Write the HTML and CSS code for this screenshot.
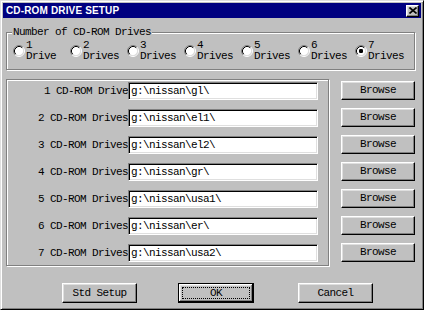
FILE: index.html
```html
<!DOCTYPE html>
<html>
<head>
<meta charset="utf-8">
<link rel="stylesheet" href="styles.css">
</head>
<body>
<div class="window">
  <div class="titlebar">
    <span class="title">CD-ROM DRIVE SETUP</span>
    <span class="close"><svg width="8" height="7" viewBox="0 0 8 7"><path d="M0.5 0.5 L7.5 6.5 M7.5 0.5 L0.5 6.5" stroke="#000" stroke-width="1.6" fill="none"/></svg></span>
  </div>
  <div class="body">
    <div class="group">
      <div class="group-title">Number of CD-ROM Drives</div>
      <div class="radios">
        <div class="radio-item"><svg class="radio" width="12" height="12" viewBox="0 0 12 12"><circle cx="6" cy="6" r="4.5" fill="#fff"/><path d="M2.11 9.89 A5.5 5.5 0 0 1 9.89 2.11" stroke="#808080" fill="none"/><path d="M9.89 2.11 A5.5 5.5 0 0 1 2.11 9.89" stroke="#fff" fill="none"/><path d="M2.82 9.18 A4.5 4.5 0 0 1 9.18 2.82" stroke="#000" fill="none"/><path d="M9.18 2.82 A4.5 4.5 0 0 1 2.82 9.18" stroke="#dfdfdf" fill="none"/></svg><div class="radio-label">1<br>Drive</div></div>
        <div class="radio-item"><svg class="radio" width="12" height="12" viewBox="0 0 12 12"><circle cx="6" cy="6" r="4.5" fill="#fff"/><path d="M2.11 9.89 A5.5 5.5 0 0 1 9.89 2.11" stroke="#808080" fill="none"/><path d="M9.89 2.11 A5.5 5.5 0 0 1 2.11 9.89" stroke="#fff" fill="none"/><path d="M2.82 9.18 A4.5 4.5 0 0 1 9.18 2.82" stroke="#000" fill="none"/><path d="M9.18 2.82 A4.5 4.5 0 0 1 2.82 9.18" stroke="#dfdfdf" fill="none"/></svg><div class="radio-label">2<br>Drives</div></div>
        <div class="radio-item"><svg class="radio" width="12" height="12" viewBox="0 0 12 12"><circle cx="6" cy="6" r="4.5" fill="#fff"/><path d="M2.11 9.89 A5.5 5.5 0 0 1 9.89 2.11" stroke="#808080" fill="none"/><path d="M9.89 2.11 A5.5 5.5 0 0 1 2.11 9.89" stroke="#fff" fill="none"/><path d="M2.82 9.18 A4.5 4.5 0 0 1 9.18 2.82" stroke="#000" fill="none"/><path d="M9.18 2.82 A4.5 4.5 0 0 1 2.82 9.18" stroke="#dfdfdf" fill="none"/></svg><div class="radio-label">3<br>Drives</div></div>
        <div class="radio-item"><svg class="radio" width="12" height="12" viewBox="0 0 12 12"><circle cx="6" cy="6" r="4.5" fill="#fff"/><path d="M2.11 9.89 A5.5 5.5 0 0 1 9.89 2.11" stroke="#808080" fill="none"/><path d="M9.89 2.11 A5.5 5.5 0 0 1 2.11 9.89" stroke="#fff" fill="none"/><path d="M2.82 9.18 A4.5 4.5 0 0 1 9.18 2.82" stroke="#000" fill="none"/><path d="M9.18 2.82 A4.5 4.5 0 0 1 2.82 9.18" stroke="#dfdfdf" fill="none"/></svg><div class="radio-label">4<br>Drives</div></div>
        <div class="radio-item"><svg class="radio" width="12" height="12" viewBox="0 0 12 12"><circle cx="6" cy="6" r="4.5" fill="#fff"/><path d="M2.11 9.89 A5.5 5.5 0 0 1 9.89 2.11" stroke="#808080" fill="none"/><path d="M9.89 2.11 A5.5 5.5 0 0 1 2.11 9.89" stroke="#fff" fill="none"/><path d="M2.82 9.18 A4.5 4.5 0 0 1 9.18 2.82" stroke="#000" fill="none"/><path d="M9.18 2.82 A4.5 4.5 0 0 1 2.82 9.18" stroke="#dfdfdf" fill="none"/></svg><div class="radio-label">5<br>Drives</div></div>
        <div class="radio-item"><svg class="radio" width="12" height="12" viewBox="0 0 12 12"><circle cx="6" cy="6" r="4.5" fill="#fff"/><path d="M2.11 9.89 A5.5 5.5 0 0 1 9.89 2.11" stroke="#808080" fill="none"/><path d="M9.89 2.11 A5.5 5.5 0 0 1 2.11 9.89" stroke="#fff" fill="none"/><path d="M2.82 9.18 A4.5 4.5 0 0 1 9.18 2.82" stroke="#000" fill="none"/><path d="M9.18 2.82 A4.5 4.5 0 0 1 2.82 9.18" stroke="#dfdfdf" fill="none"/></svg><div class="radio-label">6<br>Drives</div></div>
        <div class="radio-item"><svg class="radio" width="12" height="12" viewBox="0 0 12 12"><circle cx="6" cy="6" r="4.5" fill="#fff"/><path d="M2.11 9.89 A5.5 5.5 0 0 1 9.89 2.11" stroke="#808080" fill="none"/><path d="M9.89 2.11 A5.5 5.5 0 0 1 2.11 9.89" stroke="#fff" fill="none"/><path d="M2.82 9.18 A4.5 4.5 0 0 1 9.18 2.82" stroke="#000" fill="none"/><path d="M9.18 2.82 A4.5 4.5 0 0 1 2.82 9.18" stroke="#dfdfdf" fill="none"/><rect x="4" y="4" width="4" height="4" rx="1.2" fill="#000"/></svg><div class="radio-label">7<br>Drives</div></div>
      </div>
    </div>
    <div class="drives">
      <div class="panel">
        <div class="row"><span class="row-label">1 CD-ROM Drive</span><input class="field" type="text" value="g:\nissan\gl\"></div>
        <div class="row"><span class="row-label">2 CD-ROM Drives</span><input class="field" type="text" value="g:\nissan\el1\"></div>
        <div class="row"><span class="row-label">3 CD-ROM Drives</span><input class="field" type="text" value="g:\nissan\el2\"></div>
        <div class="row"><span class="row-label">4 CD-ROM Drives</span><input class="field" type="text" value="g:\nissan\gr\"></div>
        <div class="row"><span class="row-label">5 CD-ROM Drives</span><input class="field" type="text" value="g:\nissan\usa1\"></div>
        <div class="row"><span class="row-label">6 CD-ROM Drives</span><input class="field" type="text" value="g:\nissan\er\"></div>
        <div class="row"><span class="row-label">7 CD-ROM Drives</span><input class="field" type="text" value="g:\nissan\usa2\"></div>
      </div>
      <div class="browse-col">
        <button class="btn browse">Browse</button>
        <button class="btn browse">Browse</button>
        <button class="btn browse">Browse</button>
        <button class="btn browse">Browse</button>
        <button class="btn browse">Browse</button>
        <button class="btn browse">Browse</button>
        <button class="btn browse">Browse</button>
      </div>
    </div>
    <div class="actions">
      <button class="btn act">Std Setup</button>
      <button class="btn act default"><span class="focus">OK</span></button>
      <button class="btn act cancel">Cancel</button>
    </div>
  </div>
</div>
</body>
</html>
```

FILE: styles.css
```css
body {
  margin: 0;
  background: #c0c0c0;
}

.window {
  width: 424px;
  height: 310px;
  box-sizing: border-box;
  border: 1px solid;
  border-color: #dfdfdf #000 #000 #dfdfdf;
  box-shadow: inset 1px 1px #fff, inset -1px -1px #808080;
  padding: 2px;
  background: #c0c0c0;
  font-family: "Liberation Mono", "Courier New", monospace;
  font-size: 11px;
  letter-spacing: -0.6px;
  color: #000;
}

.titlebar {
  height: 15px;
  background: #000080;
  display: flex;
  align-items: center;
  justify-content: space-between;
  padding: 0 2px 0 3px;
}

.title {
  font: bold 10px/15px "Liberation Sans", Arial, sans-serif;
  letter-spacing: 0.15px;
  color: #fff;
}

.close {
  width: 13px;
  height: 12px;
  box-sizing: border-box;
  background: #c0c0c0;
  border: 1px solid;
  border-color: #fff #000 #000 #fff;
  box-shadow: inset -1px -1px #808080, inset 1px 1px #dfdfdf;
  display: flex;
  align-items: center;
  justify-content: center;
}

.close svg {
  display: block;
}

.body {
  padding: 0 6px 0 3px;
}

.group {
  margin-top: 14px;
  border: 1px solid #808080;
  box-shadow: inset 1px 1px #fff, 1px 1px #fff;
  padding: 0 0 7px 0;
}

.group-title {
  width: fit-content;
  margin: -6px 0 0 5px;
  padding: 0 1px;
  line-height: 11px;
  background: #c0c0c0;
}

.radios {
  display: flex;
  margin-top: 2px;
  padding-left: 6px;
}

.radio-item {
  width: 57px;
  display: flex;
  align-items: flex-start;
  gap: 1px;
}

.radio {
  flex: none;
  display: block;
  margin-top: 5px;
}

.radio-label {
  line-height: 11px;
}

.drives {
  display: flex;
  align-items: flex-start;
  margin-top: 9px;
}

.panel {
  width: 323px;
  box-sizing: border-box;
  border: 1px solid #808080;
  box-shadow: inset 1px 1px #fff, 1px 1px #fff;
  padding: 2px 10px 3px 0;
  display: flex;
  flex-direction: column;
  gap: 9px;
}

.row {
  display: flex;
  align-items: center;
  height: 18px;
}

.row-label {
  flex: 1;
  text-align: right;
  white-space: nowrap;
}

.field {
  width: 190px;
  height: 18px;
  box-sizing: border-box;
  margin: 0;
  padding: 0 2px;
  border: 1px solid;
  border-color: #808080 #fff #fff #808080;
  box-shadow: inset 1px 1px #000, inset -1px -1px #dfdfdf;
  background: #fff;
  font: inherit;
  letter-spacing: inherit;
  color: #000;
  outline: none;
}

.browse-col {
  margin-left: 12px;
  padding-top: 2px;
  display: flex;
  flex-direction: column;
  gap: 8px;
}

.btn {
  font: inherit;
  letter-spacing: inherit;
  color: #000;
  background: #c0c0c0;
  border: 1px solid;
  border-color: #fff #000 #000 #fff;
  box-shadow: inset -1px -1px #808080, inset 1px 1px #dfdfdf;
  padding: 0;
  margin: 0;
  box-sizing: border-box;
  line-height: 11px;
}

.browse {
  width: 74px;
  height: 19px;
}

.actions {
  display: flex;
  margin-top: 17px;
  padding-left: 56px;
  gap: 41px;
}

.act {
  width: 75px;
  height: 20px;
}

.default {
  width: 76px;
  border-color: #000;
  box-shadow: inset -1px -1px #000, inset 1px 1px #fff, inset -2px -2px #808080, inset 2px 2px #dfdfdf;
  padding: 3px;
  display: flex;
}

.focus {
  flex: 1;
  border: 1px dotted #000;
  display: flex;
  align-items: center;
  justify-content: center;
}

.cancel {
  margin-left: 3px;
}
```
